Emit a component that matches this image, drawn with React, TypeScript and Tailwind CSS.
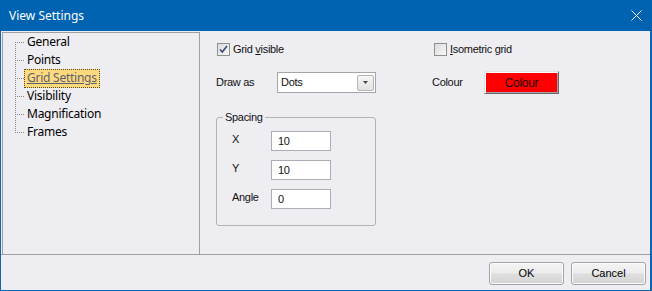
import React from "react";

const ui = { fontFamily: '"Liberation Sans", Arial, sans-serif' };
const seg = { fontFamily: '"Noto Sans", "Open Sans", sans-serif' };

const treeItems = ["General", "Points", "Grid Settings", "Visibility", "Magnification", "Frames"];

function CheckBox({ checked }: { checked?: boolean }) {
  return (
    <span className="relative flex size-[13px] shrink-0 items-center justify-center border border-[#8f8f8f] bg-[linear-gradient(135deg,#dcdcdc,#f7f7f7)]">
      {checked && (
        <svg width="11" height="11" viewBox="0 0 11 11" className="absolute left-0 top-0">
          <path d="M2 5.5 L4.3 8 L9 2" fill="none" stroke="#3a4c78" strokeWidth="1.7" />
        </svg>
      )}
    </span>
  );
}

function TreeLines() {
  const ys = [9, 27, 45, 63, 81, 99];
  return (
    <svg className="pointer-events-none absolute left-0 top-0" width="30" height="120">
      {/* vertical */}
      {Array.from({ length: 46 }).map((_, i) => (
        <rect key={"v" + i} x={12} y={9 + i * 2} width={1} height={1} fill="#8a8a8a" />
      ))}
      {ys.map((y) =>
        [14, 16, 18, 20].map((x) => <rect key={x + "-" + y} x={x} y={y} width={1} height={1} fill="#8a8a8a" />)
      )}
    </svg>
  );
}

function Field({ label, value }: { label: string; value: string }) {
  return (
    <div className="flex h-[20px] items-start">
      <span className="mt-[1px] w-[39px] leading-[14px]">{label}</span>
      <div className="flex h-[20px] w-[60px] items-center border border-[#abadb3] bg-white pl-[6px]">{value}</div>
    </div>
  );
}

function DlgButton({ children }: { children: React.ReactNode }) {
  return (
    <button className="flex h-[23px] w-[75px] items-center justify-center rounded-[3px] border border-[#a3a3a3] bg-[linear-gradient(to_bottom,#f4f4f4_0%,#ececec_48%,#dedede_52%,#d4d4d4_100%)] text-[11px] text-black shadow-[inset_0_0_0_1px_#fcfcfc]">
      {children}
    </button>
  );
}

export default function App() {
  return (
    <div className="flex h-[291px] w-[652px] flex-col bg-[#eeedf2] text-[11px] text-[#111]" style={ui}>
      {/* title bar */}
      <div className="flex h-[31px] shrink-0 items-center justify-between bg-[#0063b1] pl-[9px] pr-[10px] text-white">
        <span className="text-[12px]" style={seg}>View Settings</span>
        <svg width="11" height="11" viewBox="0 0 11 11">
          <path d="M0.5 0.5 L10.5 10.5 M10.5 0.5 L0.5 10.5" stroke="#fff" strokeWidth="1" />
        </svg>
      </div>

      <div className="flex flex-1 flex-col border-b border-l border-r-2 border-[#0c67b5]">
        <div className="flex h-[224px] border-b border-[#a0a0a0]">
          {/* tree */}
          <div className="relative ml-[1px] mt-[1px] w-[198px] border-l border-r border-t border-[#a0a0a0]" style={seg}>
            <TreeLines />
            <ul className="pl-[21px] text-[12px] tracking-[-0.25px] text-black">
              {treeItems.map((t) => (
                <li key={t} className="flex h-[18px] items-center">
                  {t === "Grid Settings" ? (
                    <span className="flex h-[19px] items-center border border-dotted border-[#5a4a20] bg-[#fdd97e] px-[2px] text-[#5e6070] underline decoration-[#5e6070]">
                      {t}
                    </span>
                  ) : (
                    <span className="flex h-[18px] items-center border border-transparent px-[2px]">{t}</span>
                  )}
                </li>
              ))}
            </ul>
          </div>

          {/* settings */}
          <div className="flex flex-1 pl-[16px] pt-[12px] tracking-[-0.3px]">
            <div className="flex w-[160px] flex-col">
              <div className="flex h-[13px] items-center pl-[1px]">
                <CheckBox checked />
                <span className="ml-[3px]">
                  Grid <span className="underline">v</span>isible
                </span>
              </div>
              <div className="mt-[16px] flex h-[21px] items-center">
                <span className="w-[61px]">Draw as</span>
                <div className="flex h-[21px] w-[99px] items-center justify-between border border-[#a5a5a5] bg-white pl-[3px] pr-[1px]">
                  <span>Dots</span>
                  <span className="flex h-[16px] w-[17px] items-center justify-center rounded-[2px] border border-[#b5b5b5] bg-[linear-gradient(to_bottom,#f6f6f6,#e2e2e2)]">
                    <svg width="5" height="3" viewBox="0 0 5 3">
                      <path d="M0 0 H5 L2.5 3 Z" fill="#444" />
                    </svg>
                  </span>
                </div>
              </div>
              <div className="relative mt-[24px] h-[109px] rounded-[3px] border border-[#b3b3b3] pl-[15px] pt-[13px]">
                <span className="absolute -top-[8px] left-[6px] bg-[#eeedf2] px-[2px] leading-[14px]">Spacing</span>
                <div className="flex flex-col gap-[9px]">
                  <Field label="X" value="10" />
                  <Field label="Y" value="10" />
                  <Field label="Angle" value="0" />
                </div>
              </div>
            </div>

            <div className="ml-[56px] flex flex-col">
              <div className="flex h-[13px] items-center pl-[2px]">
                <CheckBox />
                <span className="ml-[3px]">
                  <span className="underline">I</span>sometric grid
                </span>
              </div>
              <div className="mt-[15px] flex h-[23px] items-center">
                <span className="w-[52px]">Colour</span>
                <div className="flex h-[23px] w-[75px] items-center justify-center border border-b-[#696969] border-l-[#e3e3e3] border-r-[#696969] border-t-[#e3e3e3] bg-[#ff0000] text-[12px] text-[#1a0000] shadow-[inset_1px_1px_0_#ffffff,inset_-1px_-1px_0_#a0a0a0]">
                  Colour
                </div>
              </div>
            </div>
          </div>
        </div>

        {/* buttons */}
        <div className="flex flex-1 justify-end gap-[7px] pr-[4px] pt-[7px]">
          <DlgButton>OK</DlgButton>
          <DlgButton>Cancel</DlgButton>
        </div>
      </div>
    </div>
  );
}
